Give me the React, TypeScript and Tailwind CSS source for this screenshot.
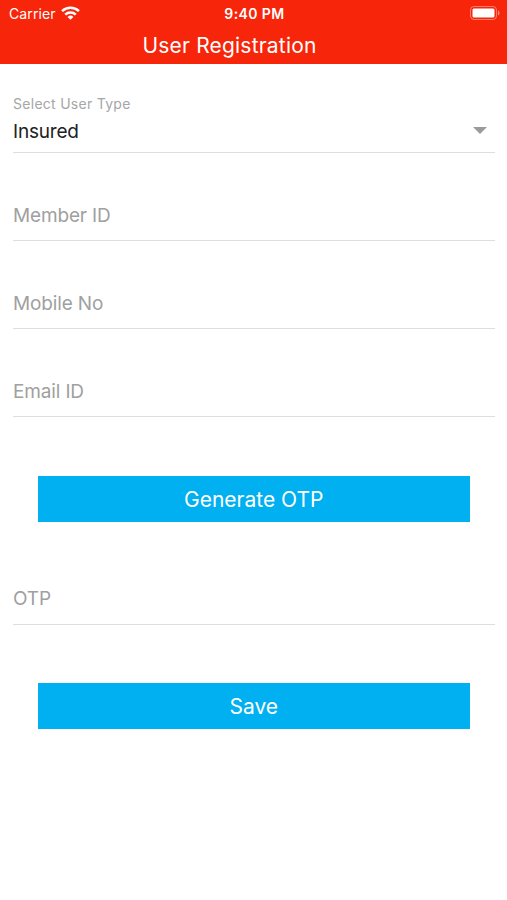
interface FieldProps {
  label: string
  className?: string
}

function Field({ label, className = 'pb-[11px]' }: FieldProps) {
  return (
    <div className={`mr-[12px] ml-[13px] flex h-[88px] items-end border-b border-[#dedede] ${className}`}>
      <span className="text-[19px] leading-[26px] tracking-[-0.15px] text-[#a0a0a0]">{label}</span>
    </div>
  )
}

function ActionButton({ label }: { label: string }) {
  return (
    <button className="mr-[37px] ml-[37.5px] flex h-[46px] items-center justify-center bg-[#00b0f0] pt-[2px] text-[21px] text-white">
      {label}
    </button>
  )
}

function StatusBar() {
  return (
    <div className="grid h-[27px] grid-cols-3 items-center pr-[7px] pl-[9px] text-[14px]">
      <div className="flex items-center gap-[5px]">
        <span className="tracking-[0.1px]">Carrier</span>
        <svg className="mb-[2px]" width="19" height="14" viewBox="0 0 18 13" fill="none" stroke="currentColor" strokeWidth="2.4">
          <path d="M1 4.7a11.5 11.5 0 0 1 16 0" />
          <path d="M4 8a7.2 7.2 0 0 1 10 0" />
          <path d="M9 13 6.2 10.2a4 4 0 0 1 5.6 0Z" fill="currentColor" stroke="none" />
        </svg>
      </div>
      <span className="text-center font-semibold tracking-[0.4px]">9:40 PM</span>
      <svg className="mb-px justify-self-end" width="30" height="14" viewBox="0 0 30 14" fill="none">
        <rect x="0.5" y="0.5" width="26" height="13" rx="3.5" stroke="white" strokeOpacity="0.4" />
        <rect x="2.5" y="2.5" width="22" height="9" rx="1.5" fill="white" />
        <path d="M28 4.5c2 .8 2 4.2 0 5Z" fill="white" fillOpacity="0.5" />
      </svg>
    </div>
  )
}

export default function App() {
  return (
    <div className="flex h-[900px] w-[507px] flex-col bg-white font-['Inter','Liberation_Sans',sans-serif]">
      <header className="h-[64px] bg-[#f72509] text-white">
        <StatusBar />
        <h1 className="pt-px pr-[48px] text-center text-[21px] leading-[36px] tracking-[0.2px]">User Registration</h1>
      </header>

      <main className="flex flex-col">
        <div className="mr-[12px] ml-[13px] flex h-[89px] flex-col justify-end border-b border-[#dedede] pb-[6px]">
          <span className="text-[14px] leading-[20px] tracking-[0.28px] text-[#a6a6a6]">Select User Type</span>
          <div className="flex items-center justify-between pt-[4px] pr-[8px]">
            <span className="text-[19px] leading-[28px] tracking-[-0.2px] text-[#212121]">Insured</span>
            <svg className="mb-[3px]" width="14" height="7" viewBox="0 0 14 7" fill="#9b9b9b">
              <path d="M0 0h14L7 7Z" />
            </svg>
          </div>
        </div>
        <Field label="Member ID" />
        <Field label="Mobile No" />
        <Field label="Email ID" className="mb-[58.5px] pb-[11px]" />
        <ActionButton label="Generate OTP" />
        <Field label="OTP" className="mt-[15.5px] mb-[58px] pb-[12px]" />
        <ActionButton label="Save" />
      </main>
    </div>
  )
}
